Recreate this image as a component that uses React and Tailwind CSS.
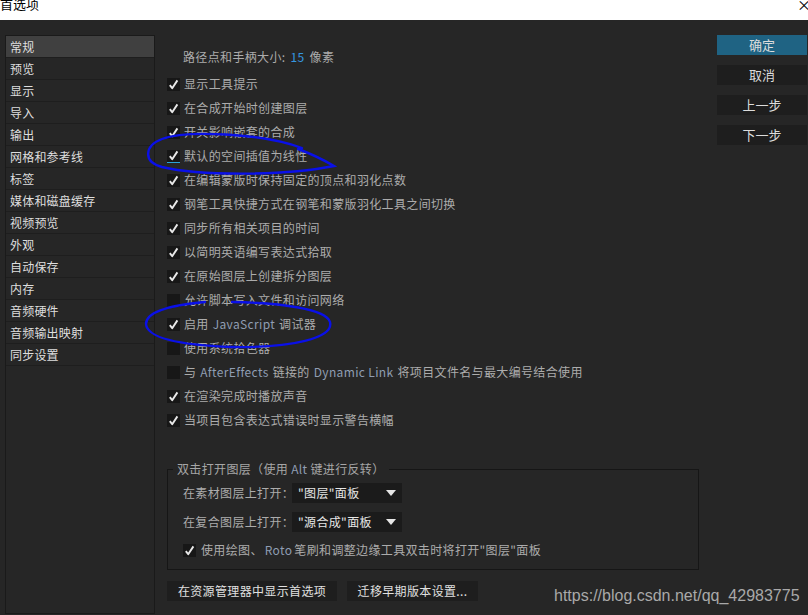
import React from 'react';

const FONT = '"Noto Sans CJK SC", "Liberation Sans", sans-serif';

const SIDEBAR = [
  '常规', '预览', '显示', '导入', '输出', '网格和参考线', '标签', '媒体和磁盘缓存',
  '视频预览', '外观', '自动保存', '内存', '音频硬件', '音频输出映射', '同步设置',
];

// latin words inside labels get a slightly bluish tint like in the original
const En = ({ children }) => <span className="text-[#8f9db2] mx-[4px]">{children}</span>;

const OPTIONS = [
  { on: true, label: '显示工具提示' },
  { on: true, label: '在合成开始时创建图层' },
  { on: true, label: '开关影响嵌套的合成' },
  { on: true, label: '默认的空间插值为线性', focus: true },
  { on: true, label: '在编辑蒙版时保持固定的顶点和羽化点数' },
  { on: true, label: '钢笔工具快捷方式在钢笔和蒙版羽化工具之间切换' },
  { on: true, label: '同步所有相关项目的时间' },
  { on: true, label: '以简明英语编写表达式拾取' },
  { on: true, label: '在原始图层上创建拆分图层' },
  { on: false, label: '允许脚本写入文件和访问网络' },
  { on: true, label: <>启用<En>JavaScript</En>调试器</> },
  { on: false, label: '使用系统拾色器' },
  { on: false, label: <>与<En>AfterEffects</En>链接的<En>Dynamic Link</En>将项目文件名与最大编号结合使用</> },
  { on: true, label: '在渲染完成时播放声音' },
  { on: true, label: '当项目包含表达式错误时显示警告横幅' },
];

function Check({ on, focus }) {
  return (
    <span className={`w-[13px] h-[13px] bg-[#171717] flex items-center justify-center shrink-0 ${focus ? 'border-b border-[#2aa3d8]' : ''}`}>
      {on && (
        <svg width="11" height="11" viewBox="0 0 11 11">
          <path d="M1.8 6.2 L4.2 9.2 L9.4 1.4" fill="none" stroke="#e8e8e8" strokeWidth="1.9" strokeLinejoin="round" />
        </svg>
      )}
    </span>
  );
}

function Dropdown({ value }) {
  return (
    <div className="w-[110px] h-[20px] bg-[#1b1b1b] flex items-center justify-between pl-[6px] pr-[6px] text-[#e6e6e6] shrink-0">
      <span className="whitespace-nowrap">{value}</span>
      <svg width="10" height="6" viewBox="0 0 10 6"><path d="M0 0 H10 L5 6 Z" fill="#e6e6e6" /></svg>
    </div>
  );
}

function SideButton({ children, primary }) {
  return (
    <div className={`h-[20px] flex items-center justify-center text-[13px] text-[#dcdcdc] ${primary ? 'bg-[#1f6383]' : 'bg-[#1e1e1e]'}`}>
      {children}
    </div>
  );
}

export default function App() {
  return (
    <div className="w-[808px] h-[615px] bg-[#262626] flex flex-col overflow-hidden relative text-[12px]" style={{ fontFamily: FONT }}>
      {/* title bar */}
      <div className="h-[20px] bg-white flex justify-between overflow-hidden shrink-0">
        <span className="text-black text-[13px] leading-[14px] -mt-[3px]">首选项</span>
        <span className="text-black text-[14px] leading-[14px] -mt-[3px] -mr-[3px]">×</span>
      </div>

      <div className="flex-1 flex pt-[15px] pl-[5px] min-h-0">
        {/* category list */}
        <div className="w-[150px] border border-[#1a1a1a] mb-[1px] flex flex-col shrink-0">
          {SIDEBAR.map((s, i) => (
            <div
              key={s}
              className={`h-[22px] flex items-center pl-[4px] border-b border-[#1e1e1e] text-[#dedede] tracking-[0.2px] ${i === 0 ? 'bg-[#404040]' : ''}`}
            >
              {s}
            </div>
          ))}
        </div>

        {/* settings */}
        <div className="w-[562px] pl-[12px] flex flex-col shrink-0 text-[#acacac] tracking-[0.35px]">
          <div className="h-[20px] mt-[12px] mb-[5px] flex items-center pl-[16px]">
            路径点和手柄大小:<span className="text-[#3597e0] mx-[5px]">15</span>像素
          </div>
          {OPTIONS.map((o, i) => (
            <div key={i} className="h-[24px] flex items-center gap-[4px]">
              <Check on={o.on} focus={o.focus} />
              <span>{o.label}</span>
            </div>
          ))}

          <fieldset className="w-[532px] border border-[#161616] mt-[28px] pl-[15px] pb-[12px]">
            <legend className="-ml-[10px] px-[4px] text-[#a6a6a6]">
              双击打开图层（使用<span className="text-[#8f9db2] mx-[3px]">Alt</span>键进行反转）
            </legend>
            <div className="flex items-center h-[20px] mt-[5px]">
              <span className="w-[109px] shrink-0 whitespace-nowrap">在素材图层上打开：</span>
              <Dropdown value="&quot;图层&quot;面板" />
            </div>
            <div className="flex items-center h-[20px] mt-[9px]">
              <span className="w-[109px] shrink-0 whitespace-nowrap">在复合图层上打开：</span>
              <Dropdown value="&quot;源合成&quot;面板" />
            </div>
            <div className="flex items-center gap-[5px] h-[14px] mt-[11px]">
              <Check on />
              <span className="whitespace-nowrap">使用绘图、<span className="text-[#8f9db2] mx-[2px]">Roto</span>笔刷和调整边缘工具双击时将打开"图层"面板</span>
            </div>
          </fieldset>

          <div className="flex gap-[10px] mt-[11px]">
            <div className="w-[170px] h-[20px] bg-[#1e1e1e] flex items-center justify-center text-[#e0e0e0]">在资源管理器中显示首选项</div>
            <div className="w-[131px] h-[20px] bg-[#1e1e1e] flex items-center justify-center text-[#e0e0e0]">迁移早期版本设置...</div>
          </div>
        </div>

        {/* dialog buttons */}
        <div className="w-[90px] flex flex-col gap-[10px] shrink-0">
          <SideButton primary>确定</SideButton>
          <SideButton>取消</SideButton>
          <SideButton>上一步</SideButton>
          <SideButton>下一步</SideButton>
        </div>
      </div>

      {/* watermark */}
      <div
        className="absolute left-[554px] top-[586px] text-[16px] leading-[20px] text-[#a9a9a9]"
        style={{ fontFamily: '"Liberation Sans", Arial, sans-serif' }}
      >
        https://blog.csdn.net/qq_42983775
      </div>

      {/* hand-drawn annotations */}
      <svg className="absolute inset-0 pointer-events-none" width="808" height="615" viewBox="0 0 808 615">
        <path
          d="M302 148 C262 133 186 130 162 139 C144 146 143 162 162 167 C200 176 284 176 334 166 C322 159 309 153 298 149"
          fill="none" stroke="#0a10e8" strokeWidth="2.4" strokeLinecap="round"
        />
        <path
          d="M205 302 C172 305 146 311 146 324 C147 338 178 345 232 347 C292 348 334 338 330 322 C326 309 282 303 232 302"
          fill="none" stroke="#0a10e8" strokeWidth="2.4" strokeLinecap="round"
        />
      </svg>
    </div>
  );
}
